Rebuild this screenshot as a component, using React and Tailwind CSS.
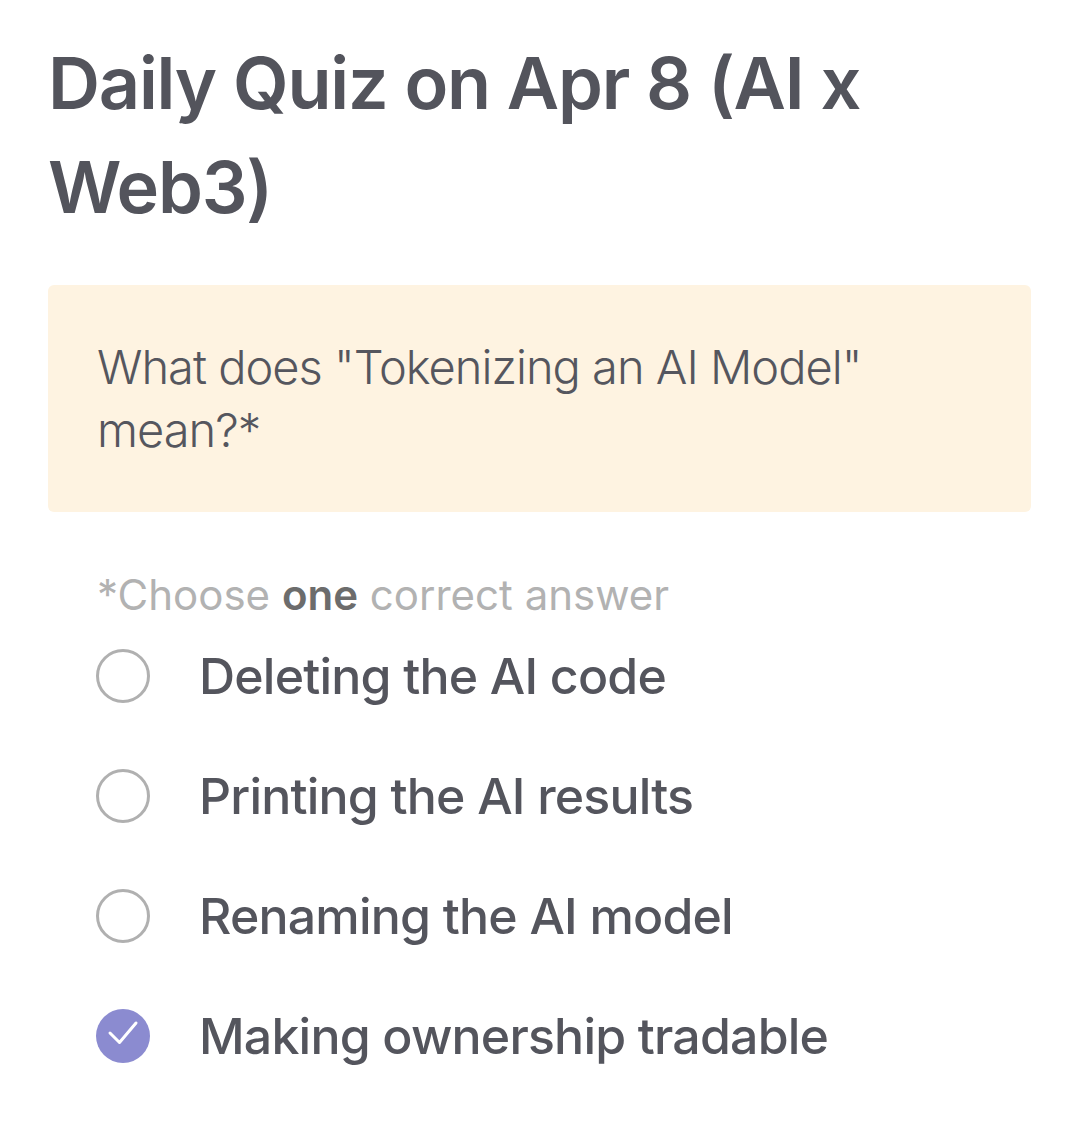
import React from "react";

const options = [
  { label: "Deleting the AI code", checked: false },
  { label: "Printing the AI results", checked: false },
  { label: "Renaming the AI model", checked: false },
  { label: "Making ownership tradable", checked: true },
];

export default function App() {
  return (
    <div
      className="w-[1080px] h-[1133px] bg-white overflow-hidden"
      style={{ fontFamily: "Inter, 'Noto Sans', sans-serif" }}
    >
      <div className="px-[48px] pt-[31px]">
        <h1 className="text-[72px] leading-[104px] font-semibold text-[#53545c] tracking-[-1.2px]">
          Daily Quiz on Apr 8 (AI x Web3)
        </h1>
        <div className="mt-[46px] w-[983px] h-[227px] rounded-[6px] bg-[#fef3e1] px-[49px] pt-[50px]">
          <p className="text-[47px] leading-[63px] font-light text-[#55565e] tracking-[-1px] w-[820px]">
            What does "Tokenizing an AI Model" mean?*
          </p>
        </div>
        <p className="mt-[58px] pl-[49px] text-[42px] leading-[50px] text-[#b2b2b2]">
          *Choose <span className="font-semibold text-[#6c6c6c]">one</span> correct answer
        </p>
        <div className="mt-[-4px] pl-[48px] flex flex-col">
          {options.map((o) => (
            <div key={o.label} className="h-[120px] flex items-center">
              {o.checked ? (
                <div className="w-[54px] h-[54px] rounded-full bg-[#8b8bd0]">
                  <svg width="54" height="54" viewBox="0 0 54 54" fill="none">
                    <path d="M14 24l9.5 9.5L40 14" stroke="white" strokeWidth="3" strokeLinecap="round" strokeLinejoin="round" />
                  </svg>
                </div>
              ) : (
                <div className="w-[54px] h-[54px] rounded-full border-[3px] border-[#b0b0b0]" />
              )}
              <span className="ml-[49px] text-[50px] font-medium text-[#54555d] tracking-[-0.8px]">
                {o.label}
              </span>
            </div>
          ))}
        </div>
      </div>
    </div>
  );
}
